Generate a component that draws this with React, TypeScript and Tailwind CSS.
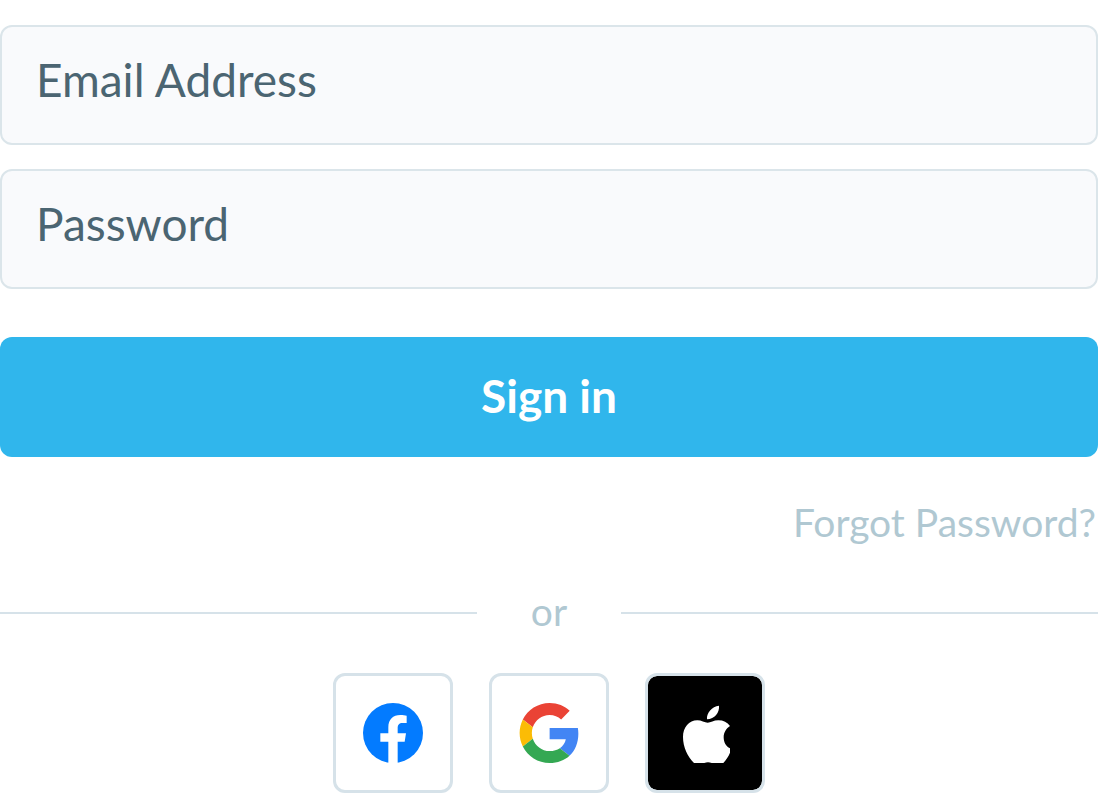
import type { ReactNode } from "react";

function FacebookIcon() {
  return (
    <svg viewBox="114 113 180 180" className="size-[60px]" aria-hidden="true">
      <circle cx="204" cy="203" r="90" fill="#037bff" />
      <path
        fill="#fff"
        d="M190 293V229H166V204H190V186C190 162 204 149 226 149C234 149 240 150 245 151V173H233C222 173 218 179 218 188V204H243L239 229H218V293Z"
      />
    </svg>
  );
}

function GoogleIcon() {
  return (
    <svg viewBox="0 0 47 48" className="size-[60px]" aria-hidden="true">
      <path fill="#EA4335" d="M24 9.5c3.54 0 6.71 1.22 9.21 3.6l6.85-6.85C35.9 2.38 30.47 0 24 0 14.62 0 6.51 5.38 2.56 13.22l7.98 6.19C12.43 13.72 17.74 9.5 24 9.5z" />
      <path fill="#4285F4" d="M46.98 24.55c0-1.57-.15-3.09-.38-4.55H24v9.02h12.94c-.58 2.96-2.26 5.48-4.78 7.18l7.73 6c4.51-4.18 7.09-10.36 7.09-17.65z" />
      <path fill="#FBBC05" d="M10.53 28.59c-.48-1.45-.76-2.99-.76-4.59s.27-3.14.76-4.59l-7.98-6.19C.92 16.46 0 20.12 0 24c0 3.88.92 7.54 2.56 10.78l7.97-6.19z" />
      <path fill="#34A853" d="M24 48c6.48 0 11.93-2.13 15.89-5.81l-7.73-6c-2.15 1.45-4.92 2.3-8.16 2.3-6.26 0-11.57-4.22-13.47-9.91l-7.98 6.19C6.51 42.62 14.62 48 24 48z" />
    </svg>
  );
}

function AppleIcon() {
  return (
    <svg viewBox="111 113 180 180" className="size-[60px]" aria-hidden="true">
      <path
        fill="#fff"
        d="M243 121C245 141 230 161 207 162C205 143 222 123 243 121ZM276 182C268 171 256 165 241 165C227 165 218 172 209 172C200 172 190 165 178 165C153 165 135 186 135 215C135 246 149 274 168 293H199C206 290 214 290 221 293H256C264 284 271 274 276 262V249C264 243 257 231 257 216C257 201 265 189 276 182Z"
      />
    </svg>
  );
}

function TextField({ label, type, autoComplete }: { label: string; type: string; autoComplete: string }) {
  return (
    <input
      type={type}
      aria-label={label}
      placeholder={label}
      autoComplete={autoComplete}
      className="block h-[120px] w-full rounded-xl border-2 border-[#dbe5ea] bg-[#f9fafc] px-[34px] pb-3 text-[46px] text-[#4b6572] placeholder:text-[#4b6572] placeholder:opacity-100"
    />
  );
}

function SocialButton({ name, className, children }: { name: string; className: string; children: ReactNode }) {
  return (
    <button
      type="button"
      aria-label={name}
      className={`flex size-[120px] items-center justify-center rounded-xl border-3 border-[#d6e2e9] ${className}`}
    >
      {children}
    </button>
  );
}

export default function App() {
  return (
    <main className="bg-white pt-[25px] font-['Lato',sans-serif]">
      <form onSubmit={(event) => event.preventDefault()}>
        <div className="flex flex-col gap-6">
          <TextField label="Email Address" type="email" autoComplete="email" />
          <TextField label="Password" type="password" autoComplete="current-password" />
        </div>
        <button
          type="submit"
          className="mt-12 flex h-[120px] w-full items-center justify-center rounded-xl bg-[#30b6ec] pb-1 text-[46px] font-bold text-white"
        >
          Sign in
        </button>
        <div className="mt-10 flex justify-end pr-0.5">
          <a href="#forgot-password" className="text-[39px] leading-[50px] text-[#b0c8d2]">
            Forgot Password?
          </a>
        </div>
        <div className="mt-[38px] flex items-center text-[#b0c8d2]">
          <div className="h-0.5 flex-1 bg-[#d6e2e9]" />
          <span className="w-36 pb-1 text-center text-[39px] leading-[52px]">or</span>
          <div className="h-0.5 flex-1 bg-[#d6e2e9]" />
        </div>
        <div className="mt-8 flex justify-center gap-9">
          <SocialButton name="Sign in with Facebook" className="bg-white">
            <FacebookIcon />
          </SocialButton>
          <SocialButton name="Sign in with Google" className="bg-white">
            <GoogleIcon />
          </SocialButton>
          <SocialButton name="Sign in with Apple" className="bg-black bg-clip-padding">
            <AppleIcon />
          </SocialButton>
        </div>
      </form>
    </main>
  );
}
